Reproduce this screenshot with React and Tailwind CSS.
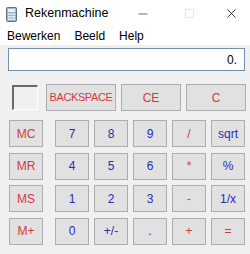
import { Minus, Square, X } from "lucide-react";

const rows = [
  ["MC", "7", "8", "9", "/", "sqrt"],
  ["MR", "4", "5", "6", "*", "%"],
  ["MS", "1", "2", "3", "-", "1/x"],
  ["M+", "0", "+/-", ".", "+", "="],
];

const redKeys = new Set(["MC", "MR", "MS", "M+", "/", "*", "-", "+", "=", "BACKSPACE", "CE", "C"]);

function Key({ label, className = "" }) {
  const red = redKeys.has(label);
  return (
    <button
      type="button"
      className={
        "flex items-center justify-center border border-[#adadad] bg-[#e1e1e1] " +
        (red ? "text-[#d63a3a] " : "text-[#2b2bb8] ") +
        className
      }
    >
      {label}
    </button>
  );
}

function CalcIcon() {
  return (
    <svg width="11" height="15" viewBox="0 0 11 15">
      <rect x="0.5" y="0.5" width="10" height="14" rx="1" fill="#9fb4cf" stroke="#5b7290" />
      <rect x="2" y="2" width="7" height="3" fill="#e8f0fa" />
      <rect x="2" y="6.5" width="2" height="1.5" fill="#eef3fa" />
      <rect x="4.5" y="6.5" width="2" height="1.5" fill="#eef3fa" />
      <rect x="7" y="6.5" width="2" height="1.5" fill="#eef3fa" />
      <rect x="2" y="9" width="2" height="1.5" fill="#eef3fa" />
      <rect x="4.5" y="9" width="2" height="1.5" fill="#eef3fa" />
      <rect x="7" y="9" width="2" height="1.5" fill="#eef3fa" />
      <rect x="2" y="11.5" width="2" height="1.5" fill="#eef3fa" />
      <rect x="4.5" y="11.5" width="2" height="1.5" fill="#eef3fa" />
      <rect x="7" y="11.5" width="2" height="1.5" fill="#eef3fa" />
    </svg>
  );
}

export default function App() {
  return (
    <div
      className="flex h-[254px] w-[250px] flex-col overflow-hidden bg-[#f0f0f0]"
      style={{ fontFamily: "'Liberation Sans', Arial, sans-serif" }}
    >
      {/* title bar */}
      <div className="flex h-[27px] items-center bg-white text-[12.5px] text-black">
        <div className="ml-[6px] mt-[1px]">
          <CalcIcon />
        </div>
        <span className="ml-[8px]">Rekenmachine</span>
        <div className="ml-auto flex items-center">
          <div className="flex w-[46px] justify-center">
            <Minus className="h-[14px] w-[14px]" strokeWidth={1} />
          </div>
          <div className="flex w-[46px] justify-center text-[#c4c4c4]">
            <Square className="h-[11px] w-[11px]" strokeWidth={1} />
          </div>
          <div className="flex w-[38px] justify-center">
            <X className="h-[15px] w-[15px]" strokeWidth={1.2} />
          </div>
        </div>
      </div>

      {/* menu bar */}
      <div className="flex h-[18px] items-center bg-white pl-[7px] text-[12px] text-black">
        <span>Bewerken</span>
        <span className="ml-[14px]">Beeld</span>
        <span className="ml-[14px]">Help</span>
      </div>

      {/* display */}
      <div className="ml-[8px] mt-[3px] flex h-[23px] w-[237px] items-center justify-end border border-[#7590ad] bg-white pr-[7px] text-[12px] text-black">
        0.
      </div>

      {/* backspace row */}
      <div className="mt-[13px] flex items-center">
        <div className="ml-[12px] h-[25px] w-[26px] border-t-2 border-l-2 border-r border-b border-t-[#6a6a6a] border-l-[#6a6a6a] border-r-white border-b-white bg-[#f0f0f0]" />
        <div className="ml-[8px] flex gap-[5px]">
          <Key label="BACKSPACE" className="h-[27px] w-[70px] text-[11px] tracking-[-0.4px]" />
          <Key label="CE" className="h-[27px] w-[60px] text-[12px]" />
          <Key label="C" className="h-[27px] w-[60px] text-[12px]" />
        </div>
      </div>

      {/* keypad */}
      <div className="ml-[9px] mt-[9px] flex flex-col gap-[5.5px]">
        {rows.map((row) => (
          <div key={row[0]} className="flex">
            <Key label={row[0]} className="h-[27px] w-[34px] text-[12px]" />
            <div className="ml-[12px] flex gap-[5px]">
              {row.slice(1).map((k) => (
                <Key key={k} label={k} className="h-[27px] w-[34px] text-[12px]" />
              ))}
            </div>
          </div>
        ))}
      </div>
    </div>
  );
}
